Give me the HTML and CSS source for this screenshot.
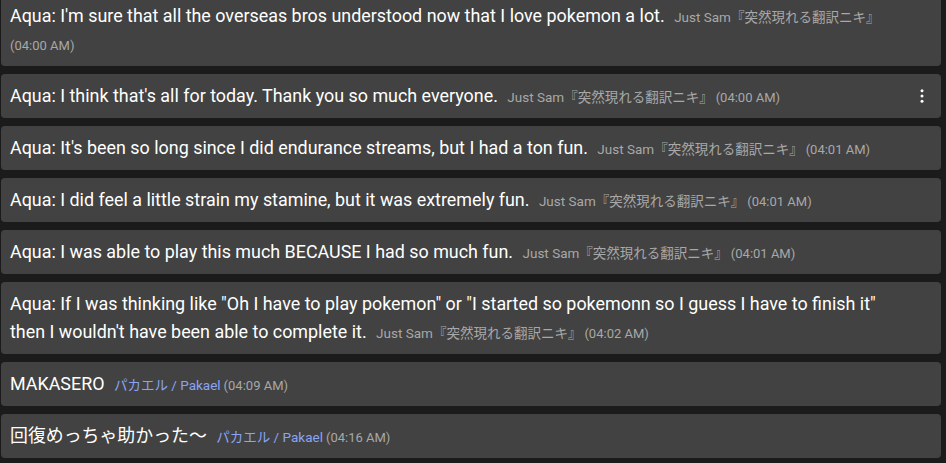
FILE: index.html
```html
<!DOCTYPE html>
<html>
<head>
<meta charset="utf-8">
<link rel="stylesheet" href="styles.css">
</head>
<body>
<div class="chat">
  <div class="msg">
    <span class="text">Aqua: I'm sure that all the overseas bros understood now that I love pokemon a lot.</span>
    <span class="author">Just Sam『突然現れる翻訳ニキ』</span><span class="time">(04:00 AM)</span>
  </div>
  <div class="msg">
    <span class="text">Aqua: I think that's all for today. Thank you so much everyone.</span>
    <span class="author">Just Sam『突然現れる翻訳ニキ』</span><span class="time">(04:00 AM)</span>
    <svg class="menu" viewBox="0 0 24 24" width="18" height="18"><circle cx="12" cy="5" r="2"/><circle cx="12" cy="12" r="2"/><circle cx="12" cy="19" r="2"/></svg>
  </div>
  <div class="msg">
    <span class="text">Aqua: It's been so long since I did endurance streams, but I had a ton fun.</span>
    <span class="author">Just Sam『突然現れる翻訳ニキ』</span><span class="time">(04:01 AM)</span>
  </div>
  <div class="msg">
    <span class="text">Aqua: I did feel a little strain my stamine, but it was extremely fun.</span>
    <span class="author">Just Sam『突然現れる翻訳ニキ』</span><span class="time">(04:01 AM)</span>
  </div>
  <div class="msg">
    <span class="text">Aqua: I was able to play this much BECAUSE I had so much fun.</span>
    <span class="author">Just Sam『突然現れる翻訳ニキ』</span><span class="time">(04:01 AM)</span>
  </div>
  <div class="msg">
    <span class="text">Aqua: If I was thinking like "Oh I have to play pokemon" or "I started so pokemonn so I guess I have to finish it" then I wouldn't have been able to complete it.</span>
    <span class="author">Just Sam『突然現れる翻訳ニキ』</span><span class="time">(04:02 AM)</span>
  </div>
  <div class="msg">
    <span class="text">MAKASERO</span>
    <span class="author blue">パカエル / Pakael</span><span class="time">(04:09 AM)</span>
  </div>
  <div class="msg">
    <span class="text">回復めっちゃ助かった〜</span>
    <span class="author blue">パカエル / Pakael</span><span class="time">(04:16 AM)</span>
  </div>
</div>
</body>
</html>
```
FILE: styles.css
```css
html, body {
  margin: 0;
  padding: 0;
  background: #1b1b1b;
}
body {
  font-family: Roboto, "Noto Sans CJK JP", sans-serif;
  overflow: hidden;
}
.chat {
  display: flex;
  flex-direction: column;
  gap: 8px;
  width: 940px;
  margin: -6px 0 0 1px;
}
.msg {
  position: relative;
  background: #424242;
  border-radius: 4px;
  padding: 8px 40px 8px 9px;
  font-size: 17.9px;
  line-height: 28px;
  color: #ffffff;
}
.text {
  margin-right: 5px;
}
.author {
  font-size: 13.5px;
  line-height: 16px;
  color: #a8a8a8;
  margin-right: 3px;
}
.author.blue {
  color: #8aa4f5;
}
.time {
  font-size: 13px;
  line-height: 16px;
  color: #a8a8a8;
  white-space: nowrap;
}
.menu {
  position: absolute;
  right: 10px;
  top: 13px;
  fill: #ffffff;
}
```
